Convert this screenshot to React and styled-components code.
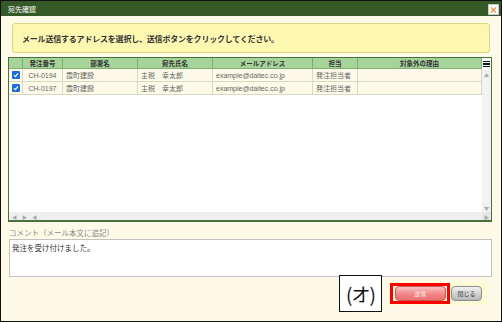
import styled, { createGlobalStyle } from "styled-components";

const GlobalStyle = createGlobalStyle`
  html, body {
    margin: 0;
    padding: 0;
    background: #ffffff;
  }
  * {
    box-sizing: border-box;
  }
`;

const FONT = `"Noto Sans CJK JP", "Noto Sans", sans-serif`;

const Window = styled.div`
  width: 502px;
  height: 322px;
  border: 1px solid #111;
  background: #fefae8;
  display: flex;
  flex-direction: column;
  font-family: ${FONT};
  overflow: hidden;
`;

const TitleBar = styled.div`
  height: 15px;
  background: #365a27;
  color: #ffffff;
  font-size: 7px;
  display: flex;
  align-items: center;
  justify-content: space-between;
  padding: 0 2px 0 7px;
  flex-shrink: 0;
`;

const CloseBox = styled.div`
  width: 11px;
  height: 11px;
  background: #ffffff;
  border: 1px solid #c8c8c8;
  display: flex;
  align-items: center;
  justify-content: center;
  color: #ef7d1a;
  font-size: 9px;
  font-weight: bold;
  line-height: 1;
  margin-top: 2px;
`;

const Content = styled.div`
  flex: 1;
  display: flex;
  flex-direction: column;
  padding: 0 9px 0 7px;
`;

const Notice = styled.div`
  margin: 7px 2px 0 4px;
  height: 30px;
  border: 1px solid #e2d67c;
  border-radius: 3px;
  background: #fdf8b1;
  color: #333;
  font-size: 8px;
  font-weight: bold;
  letter-spacing: -0.2px;
  display: flex;
  align-items: center;
  padding-left: 9px;
`;

const Grid = styled.div`
  margin-top: 4px;
  height: 165px;
  border: 1px solid #4a7040;
  border-bottom-width: 2px;
  background: #ffffff;
  display: flex;
  flex-direction: column;
`;

const GridMain = styled.div`
  flex: 1;
  display: flex;
  min-height: 0;
`;

const GridBody = styled.div`
  flex: 1;
  display: flex;
  flex-direction: column;
`;

const COLS = "14px 40px 75px 75px 100px 45px 124px";

const HeaderRow = styled.div`
  display: grid;
  grid-template-columns: ${COLS};
  height: 11px;
  background: #a7d49b;
  border-bottom: 1px solid #7fae72;
`;

const HeadCell = styled.div`
  border-right: 1px solid #7fae72;
  font-size: 6.5px;
  font-weight: bold;
  color: #333;
  display: flex;
  align-items: center;
  justify-content: center;
  line-height: 1;
`;

const Row = styled.div`
  display: grid;
  grid-template-columns: ${COLS};
  height: 13px;
  background: #fefae9;
  border-bottom: 1px solid #d6d9c4;
`;

const Cell = styled.div`
  border-right: 1px solid #d6d9c4;
  font-size: 7px;
  color: #666;
  display: flex;
  align-items: center;
  justify-content: ${(p) => (p.$center ? "center" : "flex-start")};
  padding-left: ${(p) => (p.$center ? "0" : "3px")};
  font-family: ${(p) => (p.$latin ? `"Liberation Sans", ${FONT}` : FONT)};
  line-height: 1;
  white-space: nowrap;
`;

const Check = styled.div`
  width: 8px;
  height: 8px;
  background: #1c6ee0;
  border-radius: 1px;
  display: flex;
  align-items: center;
  justify-content: center;
`;

const VScroll = styled.div`
  width: 9px;
  display: flex;
  flex-direction: column;
  background: #f0f0f0;
`;

const MenuButton = styled.div`
  height: 12px;
  background: #ffffff;
  display: flex;
  flex-direction: column;
  justify-content: center;
  gap: 1px;
  padding: 0 1px;
  span {
    display: block;
    height: 1.5px;
    background: #111;
  }
`;

const Arrow = styled.div`
  height: 9px;
  color: #aaa;
  font-size: 5px;
  display: flex;
  align-items: center;
  justify-content: center;
  line-height: 1;
`;

const VTrack = styled.div`
  flex: 1;
  background: #f3f3f3;
`;

const HScroll = styled.div`
  height: 8px;
  background: #efefef;
  display: flex;
  align-items: center;
  color: #aaa;
  font-size: 5px;
  padding-left: 3px;
  gap: 5px;
  line-height: 1;
`;

const HEnd = styled.span`
  margin-left: auto;
  width: 9px;
  height: 8px;
  display: flex;
  align-items: center;
  justify-content: center;
  background: #e6e6e6;
`;

const CommentLabel = styled.div`
  margin-top: 5px;
  font-size: 7.5px;
  color: #8a8a8a;
  padding-left: 1px;
  height: 11px;
  line-height: 11px;
`;

const CommentBox = styled.textarea`
  margin: 1px 0 0 1px;
  height: 38px;
  border: 1px solid #c2c2c2;
  background: #ffffff;
  font-family: ${FONT};
  font-size: 7.5px;
  color: #333;
  padding: 2px 2px;
  resize: none;
  outline: none;
`;

const Footer = styled.div`
  display: flex;
  justify-content: flex-end;
  align-items: center;
  margin-top: -2px;
  padding-right: 4px;
`;

const Callout = styled.div`
  width: 43px;
  height: 37px;
  border: 1px solid #111;
  background: #ffffff;
  font-family: ${FONT};
  font-size: 19px;
  color: #111;
  display: flex;
  align-items: center;
  justify-content: center;
  margin-right: 7px;
  letter-spacing: -1px;
`;

const ButtonBar = styled.div`
  width: 99px;
  height: 23px;
  background: #fdfbd6;
  display: flex;
  align-items: center;
  padding-left: 1px;
  gap: 1px;
`;

const Highlight = styled.div`
  width: 60px;
  height: 21px;
  border: 3px solid #ff0000;
  display: flex;
  align-items: center;
  justify-content: center;
`;

const Button = styled.div`
  height: 15px;
  width: ${(p) => p.$w}px;
  border-radius: 4px;
  border: 1px solid ${(p) => (p.$primary ? "#c85a5a" : "#8a8a8a")};
  background: ${(p) =>
    p.$primary
      ? "linear-gradient(#fbc4c4, #f18585 55%, #ec7272)"
      : "linear-gradient(#f2f2f2, #d0d0d0 55%, #b8b8b8)"};
  color: ${(p) => (p.$primary ? "#fde5e5" : "#333")};
  font-size: 6px;
  display: flex;
  align-items: center;
  justify-content: center;
  line-height: 1;
`;

const rows = [
  { no: "CH-0194", dept: "霞町建設", name: "主税　幸太郎", mail: "example@daitec.co.jp", role: "発注担当者" },
  { no: "CH-0197", dept: "霞町建設", name: "主税　幸太郎", mail: "example@daitec.co.jp", role: "発注担当者" },
];

const headers = ["発注番号", "部署名", "宛先氏名", "メールアドレス", "担当", "対象外の理由"];

const CheckMark = () => (
  <Check>
    <svg width="6" height="6" viewBox="0 0 6 6">
      <path d="M1 3.2 L2.4 4.6 L5 1.4" stroke="#fff" strokeWidth="1.1" fill="none" />
    </svg>
  </Check>
);

export default function App() {
  return (
    <>
      <GlobalStyle />
      <Window>
        <TitleBar>
          <span>宛先確認</span>
          <CloseBox>×</CloseBox>
        </TitleBar>
        <Content>
          <Notice>メール送信するアドレスを選択し、送信ボタンをクリックしてください。</Notice>
          <Grid>
            <GridMain>
              <GridBody>
                <HeaderRow>
                  <HeadCell />
                  {headers.map((h) => (
                    <HeadCell key={h}>{h}</HeadCell>
                  ))}
                </HeaderRow>
                {rows.map((r, i) => (
                  <Row key={i}>
                    <Cell $center>
                      <CheckMark />
                    </Cell>
                    <Cell $center $latin>{r.no}</Cell>
                    <Cell>{r.dept}</Cell>
                    <Cell>{r.name}</Cell>
                    <Cell $latin>{r.mail}</Cell>
                    <Cell>{r.role}</Cell>
                    <Cell />
                  </Row>
                ))}
              </GridBody>
              <VScroll>
                <MenuButton>
                  <span />
                  <span />
                  <span />
                </MenuButton>
                <Arrow>▲</Arrow>
                <VTrack />
                <Arrow>▼</Arrow>
              </VScroll>
            </GridMain>
            <HScroll>
              <span>◀</span>
              <span>▶</span>
              <span>◀</span>
              <HEnd>▶</HEnd>
            </HScroll>
          </Grid>
          <CommentLabel>コメント（メール本文に追記）</CommentLabel>
          <CommentBox readOnly defaultValue="発注を受け付けました。" />
          <Footer>
            <Callout>(オ)</Callout>
            <ButtonBar>
              <Highlight>
                <Button $primary $w={51}>送信</Button>
              </Highlight>
              <Button $w={31}>閉じる</Button>
            </ButtonBar>
          </Footer>
        </Content>
      </Window>
    </>
  );
}
